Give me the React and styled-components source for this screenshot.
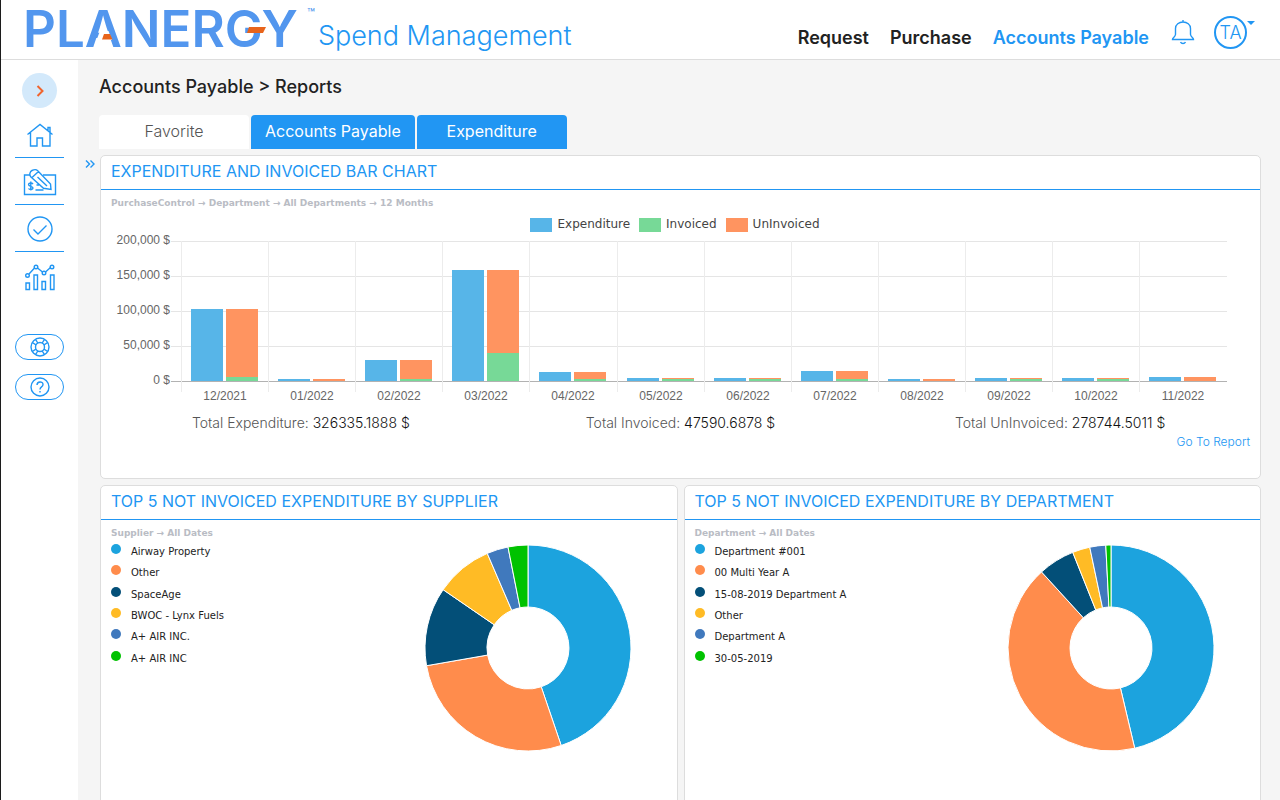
import React from "react";
import styled, { createGlobalStyle } from "styled-components";

const months = [
  { label: "12/2021", spent: 103000, invoiced: 5500 },
  { label: "01/2022", spent: 2600, invoiced: 0 },
  { label: "02/2022", spent: 30200, invoiced: 2400 },
  { label: "03/2022", spent: 158700, invoiced: 40200 },
  { label: "04/2022", spent: 12600, invoiced: 2600 },
  { label: "05/2022", spent: 4200, invoiced: 2600 },
  { label: "06/2022", spent: 4200, invoiced: 2600 },
  { label: "07/2022", spent: 14400, invoiced: 2600 },
  { label: "08/2022", spent: 2700, invoiced: 0 },
  { label: "09/2022", spent: 4200, invoiced: 2600 },
  { label: "10/2022", spent: 4200, invoiced: 2600 },
  { label: "11/2022", spent: 6000, invoiced: 0 },
];

const series = [
  { name: "Expenditure", color: "#57b5e8" },
  { name: "Invoiced", color: "#77d997" },
  { name: "UnInvoiced", color: "#ff9460" },
];

const totals = [
  { label: "Total Expenditure:", value: "326335.1888 $" },
  { label: "Total Invoiced:", value: "47590.6878 $" },
  { label: "Total UnInvoiced:", value: "278744.5011 $" },
];

const colors = ["#1ca3de", "#ff8c4c", "#034f78", "#ffbb25", "#4079bd", "#00c200"];

// "end" is the angle in degrees where the slice stops
const suppliers = [
  { name: "Airway Property", end: 161.2 },
  { name: "Other", end: 260.1 },
  { name: "SpaceAge", end: 304.5 },
  { name: "BWOC - Lynx Fuels", end: 336.7 },
  { name: "A+ AIR INC.", end: 348.8 },
  { name: "A+ AIR INC", end: 360 },
];

const departments = [
  { name: "Department #001", end: 166.7 },
  { name: "00 Multi Year A", end: 317.6 },
  { name: "15-08-2019 Department A", end: 338.2 },
  { name: "Other", end: 348.1 },
  { name: "Department A", end: 357.1 },
  { name: "30-05-2019", end: 360 },
];

const BarChart = () => {
  const base = 149;
  const toPx = (v) => Math.round((v * 35) / 50000);
  return (
    <ChartSvg viewBox="0 0 1128 172" role="img" aria-label="Expenditure and invoiced by month">
      {[200, 150, 100, 50, 0].map((tick, i) => (
        <g key={tick}>
          <rect x="60" y={9 + i * 35} width="1056" height="1" fill={tick ? "#e5e5e5" : "#b2b2b2"} />
          <text x="59" y={12 + i * 35} textAnchor="end">
            {tick ? `${tick},000 $` : "0 $"}
          </text>
        </g>
      ))}
      {months.map((m, i) => {
        const x = 70 + Math.round(i * 87.1);
        const total = toPx(m.spent);
        const paid = toPx(m.invoiced);
        return (
          <g key={m.label}>
            <rect x={x} y="9" width="1" height="151" fill="#ececec" />
            <rect x={x + 10} y={base - total} width="32" height={total} fill={series[0].color} />
            <rect x={x + 45} y={base - total} width="32" height={total - paid} fill={series[2].color} />
            <rect x={x + 45} y={base - paid} width="32" height={paid} fill={series[1].color} />
            <text x={x + 44} y="168" textAnchor="middle">
              {m.label}
            </text>
          </g>
        );
      })}
    </ChartSvg>
  );
};

const point = (angle, r) => {
  const rad = ((angle - 90) * Math.PI) / 180;
  return `${(103 + r * Math.cos(rad)).toFixed(2)} ${(103 + r * Math.sin(rad)).toFixed(2)}`;
};

const Donut = ({ slices }) => (
  <DonutSvg viewBox="0 0 206 206" aria-hidden="true">
    {slices.map((s, i) => {
      const start = i ? slices[i - 1].end : 0;
      const large = s.end - start > 180 ? 1 : 0;
      return (
        <path
          key={s.name}
          fill={colors[i]}
          stroke="#fff"
          strokeWidth="1"
          d={`M${point(start, 103)} A103 103 0 ${large} 1 ${point(s.end, 103)} L${point(s.end, 41)} A41 41 0 ${large} 0 ${point(start, 41)} Z`}
        />
      );
    })}
  </DonutSvg>
);

const DonutCard = ({ title, path, slices }) => (
  <Card>
    <CardTitle>{title}</CardTitle>
    <Path>{path}</Path>
    <DonutBody>
      <SliceList>
        {slices.map((s, i) => (
          <Slice key={s.name} $color={colors[i]}>
            {s.name}
          </Slice>
        ))}
      </SliceList>
      <Donut slices={slices} />
    </DonutBody>
  </Card>
);

const HomeIcon = () => (
  <Icon width="28" height="24" viewBox="0 0 28 24">
    <path d="M1.500 11.500 14 1.500l12.500 10M4.500 9.500v13.500h6.500v-8h5.500v8H24V9.500M22 7.500V4.500h2v4.500" />
  </Icon>
);

const InvoiceIcon = () => (
  <Icon width="34" height="28" viewBox="0 0 34 28">
    <path d="M7 7H1.500v19.500h31V7H20" />
    <path d="M7.700 8.700C6 6.500 7 3.500 9 2.500c2-1 4.500-1 5.700.2L27.500 16l.5 5.500-7.500-1.200zM9 9.500l6.500-6M14.500 9l9.500 9M12.500 22h8M13.500 17H16" />
    <path d="M10 16c-1-1.500-4.500-1.500-4.500.5 0 2.300 4.500 1.300 4.500 3.600 0 2-3.500 2-4.500.4M7.800 13.500v9" />
  </Icon>
);

const CheckIcon = () => (
  <Icon width="26" height="26" viewBox="0 0 26 26">
    <circle cx="13" cy="13" r="12" />
    <path d="m6.500 13.500 4.500 4.500 8.500-8.500" />
  </Icon>
);

const ChartIcon = () => (
  <Icon width="32" height="28" viewBox="0 0 32 28">
    <path d="M2 20h3.500v6.500H2zM10 12h3.500v14.500H10zM18 18.500h3.500v8H18zM26.500 12H30v14.500h-3.500zM5 11l5.500-6M13.500 5l5 4M21.500 9l5-4.500" />
    <circle cx="3.500" cy="12.500" r="1.800" />
    <circle cx="12" cy="4" r="1.800" />
    <circle cx="20" cy="10" r="1.800" />
    <circle cx="28" cy="4" r="1.800" />
  </Icon>
);

const SupportIcon = () => (
  <Icon width="20" height="20" viewBox="0 0 20 20">
    <circle cx="10" cy="10" r="9" />
    <circle cx="10" cy="10" r="4.500" />
    <path d="M5.500 2.300 7.800 6M2.300 5.500 6 7.800M14.500 2.300 12.200 6M17.700 5.500 14 7.800M5.500 17.700 7.800 14M2.300 14.500 6 12.200M14.500 17.700 12.200 14M17.700 14.500 14 12.200" />
  </Icon>
);

const HelpIcon = () => (
  <Icon width="20" height="20" viewBox="0 0 20 20">
    <circle cx="10" cy="10" r="9" />
    <path d="M7 8c0-4 6-4 6-.5 0 2.500-3 2.300-3 5M10 14v1.500" />
  </Icon>
);

const App = () => {
  return (
    <Page>
      <GlobalStyle />
      <Header>
        <Brand>
          <Logo>
            PLANERGY
            <LogoMarks viewBox="0 0 280 40" aria-hidden="true">
              <path fill="#fff" d="M77 22h8.500l3.500 9H73.500z" />
              <path fill="#e8641b" d="M81 25h6l2.500 5.500H79z" />
              <path fill="#e8641b" d="M226 18h17l-3 6h-16z" />
            </LogoMarks>
          </Logo>
          <Trademark>™</Trademark>
          <Product>Spend Management</Product>
        </Brand>
        <TopNav>
          <TopLink href="#request">Request</TopLink>
          <TopLink href="#purchase">Purchase</TopLink>
          <TopLink href="#payable" $active>
            Accounts Payable
          </TopLink>
        </TopNav>
        <BellButton aria-label="Notifications">
          <Icon width="24" height="26" viewBox="0 0 24 26">
            <path d="M12 3V1M1.500 20.500c0-2 2.500-2 3-5V9.500C4.500 5.500 8 3 12 3s7.500 2.500 7.500 6.500v6c.5 3 3 3 3 5zM9.500 23c1 2 4 2 5 0" />
          </Icon>
        </BellButton>
        <UserButton aria-label="User menu">
          <Avatar>TA</Avatar>
          <svg width="8" height="4" viewBox="0 0 8 4">
            <path d="M0 0h8L4 4z" fill="#2196f3" />
          </svg>
        </UserButton>
      </Header>
      <Body>
        <Sidebar>
          <Toggle aria-label="Expand menu">
            <svg width="8" height="12" viewBox="0 0 8 12" fill="none">
              <path d="m1.500 1 5 5-5 5" stroke="#f0642d" strokeWidth="2" />
            </svg>
          </Toggle>
          <SideLink href="#home" aria-label="Home"><HomeIcon /></SideLink>
          <SideLink href="#invoices" aria-label="Invoices"><InvoiceIcon /></SideLink>
          <SideLink href="#approvals" aria-label="Approvals"><CheckIcon /></SideLink>
          <SideLink href="#reports" aria-label="Reports"><ChartIcon /></SideLink>
          <Helpers>
            <Pill aria-label="Support"><SupportIcon /></Pill>
            <Pill aria-label="Help"><HelpIcon /></Pill>
          </Helpers>
        </Sidebar>
        <Expander aria-label="Show filters">
          <Icon width="10" height="8" viewBox="0 0 10 8">
            <path d="m1 .5 3.500 3.500L1 7.500M5.500.5 9 4 5.500 7.500" />
          </Icon>
        </Expander>
        <Main>
          <PageTitle>Accounts Payable &gt; Reports</PageTitle>
          <Tabs>
            <Tab>Favorite</Tab>
            <Tab $filled>Accounts Payable</Tab>
            <Tab $filled>Expenditure</Tab>
          </Tabs>
          <Cards>
            <Card>
              <CardTitle>EXPENDITURE AND INVOICED BAR CHART</CardTitle>
              <Path>PurchaseControl → Department → All Departments → 12 Months</Path>
              <ChartArea>
                <Legend>
                  {series.map((s) => (
                    <LegendItem key={s.name} $color={s.color}>
                      {s.name}
                    </LegendItem>
                  ))}
                </Legend>
                <BarChart />
              </ChartArea>
              <Totals>
                {totals.map((t) => (
                  <Total key={t.label}>
                    {t.label} <b>{t.value}</b>
                  </Total>
                ))}
              </Totals>
              <ReportLink href="#report">Go To Report</ReportLink>
            </Card>
            <Columns>
              <DonutCard
                title="TOP 5 NOT INVOICED EXPENDITURE BY SUPPLIER"
                path="Supplier → All Dates"
                slices={suppliers}
              />
              <DonutCard
                title="TOP 5 NOT INVOICED EXPENDITURE BY DEPARTMENT"
                path="Department → All Dates"
                slices={departments}
              />
            </Columns>
          </Cards>
        </Main>
      </Body>
    </Page>
  );
};

export default App;

const GlobalStyle = createGlobalStyle`
  * {
    box-sizing: border-box;
  }
  body {
    margin: 0;
    background-color: #f5f5f5;
    color: #222;
    font-family: Inter, "Liberation Sans", sans-serif;
  }
  button {
    padding: 0;
    border: none;
    background: none;
    font-family: inherit;
    cursor: pointer;
  }
  a {
    text-decoration: none;
  }
`;

const Page = styled.div`
  display: flex;
  flex-direction: column;
  height: 100vh;
  border-left: 1px solid #1c1c1c;
`;

const Header = styled.header`
  display: flex;
  align-items: flex-start;
  height: 60px;
  padding: 0 25px 0 22px;
  background-color: #fff;
  border-bottom: 1px solid #ddd;
`;

const Brand = styled.div`
  display: flex;
  flex: 1;
`;

const Logo = styled.div`
  position: relative;
  font-size: 51px;
  font-weight: 600;
  line-height: 58px;
  color: #5296ee;
`;

const LogoMarks = styled.svg`
  position: absolute;
  top: 9px;
  left: 0;
  width: 280px;
  height: 40px;
`;

const Trademark = styled.span`
  padding: 5px 3px 0 9px;
  font-size: 13px;
  line-height: 16px;
  color: #5296ee;
`;

const Product = styled.span`
  font-size: 27px;
  font-weight: 300;
  line-height: 71px;
  color: #2196f3;
  white-space: nowrap;
`;

const TopNav = styled.nav`
  display: flex;
  gap: 21px;
`;

const TopLink = styled.a`
  font-size: 18px;
  font-weight: 600;
  line-height: 76px;
  color: ${({ $active }) => ($active ? "#2196f3" : "#222")};
  white-space: nowrap;
`;

const Icon = styled.svg`
  fill: none;
  stroke: #2196f3;
  stroke-width: 1.4px;
`;

const BellButton = styled.button`
  height: 26px;
  margin: 19px 19px 0 22px;
`;

const UserButton = styled.button`
  display: flex;
  align-items: flex-start;
  margin-top: 16px;

  svg {
    margin-top: 5px;
  }
`;

const Avatar = styled.span`
  width: 33px;
  height: 33px;
  border: 2px solid #2196f3;
  border-radius: 50%;
  font-size: 18px;
  font-weight: 300;
  line-height: 29px;
  color: #2196f3;
`;

const Body = styled.div`
  display: flex;
  flex: 1;
  min-height: 0;
`;

const Sidebar = styled.aside`
  display: flex;
  flex-direction: column;
  align-items: center;
  width: 77px;
  padding: 13px 14px 0;
  background-color: #fff;
`;

const Toggle = styled.button`
  display: flex;
  align-items: center;
  justify-content: center;
  width: 35px;
  height: 35px;
  margin-bottom: 3px;
  border-radius: 50%;
  background-color: #d3e9fb;
`;

const SideLink = styled.a`
  display: flex;
  align-items: center;
  justify-content: center;
  width: 100%;
  height: 47px;
  padding-top: 2px;
  border-bottom: 1px solid #2196f3;

  &:last-of-type {
    border-bottom: none;
  }
`;

const Helpers = styled.div`
  display: flex;
  flex-direction: column;
  gap: 14px;
  width: 100%;
  margin-top: 35px;
`;

const Pill = styled.button`
  display: flex;
  align-items: center;
  justify-content: center;
  height: 26px;
  border: 1px solid #2196f3;
  border-radius: 13px;
`;

const Expander = styled.button`
  display: flex;
  align-items: center;
  justify-content: flex-end;
  width: 21px;
  height: 20px;
  margin-top: 94px;
  padding-right: 4px;
`;

const Main = styled.main`
  flex: 1;
  min-width: 0;
  padding: 0 19px 20px 0;
  overflow-y: auto;
  scrollbar-width: none;
`;

const PageTitle = styled.h1`
  margin: 0;
  padding-top: 16px;
  font-size: 18px;
  font-weight: 500;
  line-height: 22px;
`;

const Tabs = styled.div`
  display: flex;
  gap: 2px;
  margin: 17px 0 6px;
`;

const Tab = styled.button`
  min-width: 150px;
  height: 34px;
  padding: 0 14px 2px;
  border-radius: 4px 4px 0 0;
  background-color: ${({ $filled }) => ($filled ? "#2196f3" : "#fff")};
  color: ${({ $filled }) => ($filled ? "#fff" : "#555")};
  font-size: 16px;
  font-weight: ${({ $filled }) => ($filled ? 400 : 300)};
`;

const Cards = styled.div`
  padding-left: 1px;
`;

const Card = styled.section`
  display: flex;
  flex-direction: column;
  min-height: 324px;
  border: 1px solid #ddd;
  border-radius: 5px;
  background-color: #fff;
`;

const CardTitle = styled.h2`
  margin: 0;
  padding: 0 10px 2px;
  border-bottom: 1px solid #2196f3;
  font-size: 16px;
  font-weight: 400;
  line-height: 31px;
  color: #2196f3;
  white-space: nowrap;
`;

const Path = styled.div`
  padding: 6px 10px 0;
  font-family: "DejaVu Sans", sans-serif;
  font-size: 9px;
  font-weight: 700;
  line-height: 14px;
  color: #b9bcc4;
`;

const ChartArea = styled.div`
  padding: 6px 21px 0 10px;
`;

const Legend = styled.div`
  display: flex;
  justify-content: center;
  gap: 9px;
`;

const LegendItem = styled.span`
  display: flex;
  align-items: flex-end;
  gap: 5px;
  font-family: "DejaVu Sans", sans-serif;
  font-size: 12px;
  line-height: 16px;
  color: #444;

  &::before {
    content: "";
    width: 22px;
    height: 14px;
    background-color: ${({ $color }) => $color};
  }
`;

const ChartSvg = styled.svg`
  display: block;
  width: 100%;

  text {
    font-family: "Liberation Sans", sans-serif;
    font-size: 12px;
    fill: #666;
  }
`;

const Totals = styled.div`
  display: grid;
  grid-template-columns: repeat(3, 1fr);
  padding: 10px 10px 0;
`;

const Total = styled.div`
  font-size: 14px;
  font-weight: 300;
  line-height: 18px;
  color: #555;
  text-align: center;

  b {
    font-weight: 300;
    color: #111;
  }
`;

const ReportLink = styled.a`
  align-self: flex-end;
  padding: 0 10px;
  font-size: 12px;
  font-weight: 300;
  line-height: 20px;
  color: #2196f3;
`;

const Columns = styled.div`
  display: grid;
  grid-template-columns: 1fr 1fr;
  gap: 6px;
  margin-top: 6px;
`;

const DonutBody = styled.div`
  display: flex;
  justify-content: space-between;
  padding: 4px 46px 0 10px;
`;

const SliceList = styled.ul`
  display: grid;
  grid-template-rows: repeat(6, 1fr);
  height: 128px;
  margin: 0;
  padding: 0;
  list-style: none;
`;

const Slice = styled.li`
  display: flex;
  gap: 10px;
  font-family: "DejaVu Sans", sans-serif;
  font-size: 10px;
  line-height: 15px;

  &::before {
    content: "";
    width: 10px;
    height: 10px;
    border-radius: 50%;
    background-color: ${({ $color }) => $color};
  }
`;

const DonutSvg = styled.svg`
  width: 206px;
  height: 206px;
  margin-top: 1px;
`;
